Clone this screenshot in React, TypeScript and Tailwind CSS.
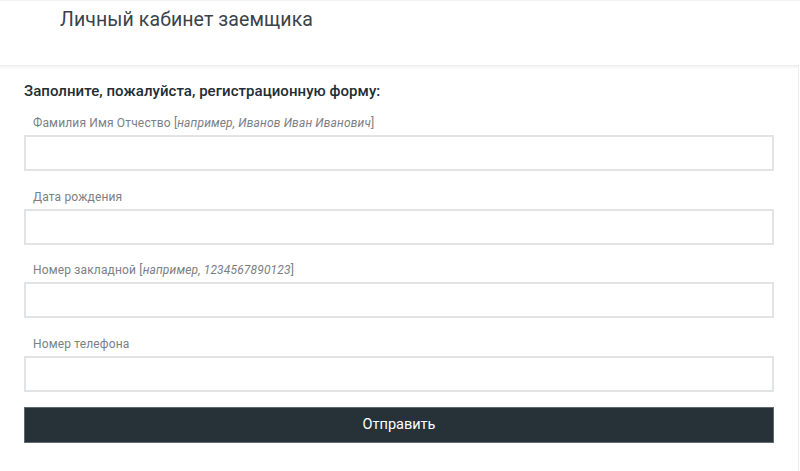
import React from "react";

const fields = [
  { label: "Фамилия Имя Отчество", hint: "например, Иванов Иван Иванович" },
  { label: "Дата рождения" },
  { label: "Номер закладной", hint: "например, 1234567890123" },
  { label: "Номер телефона" },
];

export default function App() {
  return (
    <div className="w-[800px] h-[471px] bg-white overflow-hidden" style={{ fontFamily: "Roboto, 'Noto Sans', sans-serif" }}>
      <div className="h-[65px] pl-[60px] pt-[6px] border-t border-[#f3f3f3]">
        <h1 className="text-[19.5px] leading-[26px] text-[#3a4349] font-normal tracking-[0.1px]">Личный кабинет заемщика</h1>
      </div>
      <div className="relative w-[799px] border-r border-[#ececec] h-[406px] px-[24px] pt-[16px]">
        <div className="absolute left-0 right-0 top-0 h-[4px] bg-gradient-to-b from-[#ededed] to-white" />
        <h2 className="text-[15px] leading-[20px] font-medium text-[#222d35] tracking-[0.05px]">Заполните, пожалуйста, регистрационную форму:</h2>
        <div className="flex flex-col gap-[17.5px] mt-[14px]">
          {fields.map((f) => (
            <div key={f.label} className="flex flex-col">
              <div className="pl-[9px] text-[12px] leading-[16px] text-[#7b8085] h-[20px] tracking-[0.15px]">
                {f.label}
                {f.hint && (
                  <>
                    {" "}[<i>{f.hint}</i>]
                  </>
                )}
              </div>
              <input className="h-[36px] w-full border-2 border-[#e2e3e4] bg-white outline-none" />
            </div>
          ))}
          <button className="mt-[-2.5px] h-[36px] w-full bg-[#263238] text-white text-[14.5px] border border-[#5d6a72]">Отправить</button>
        </div>
      </div>
    </div>
  );
}
